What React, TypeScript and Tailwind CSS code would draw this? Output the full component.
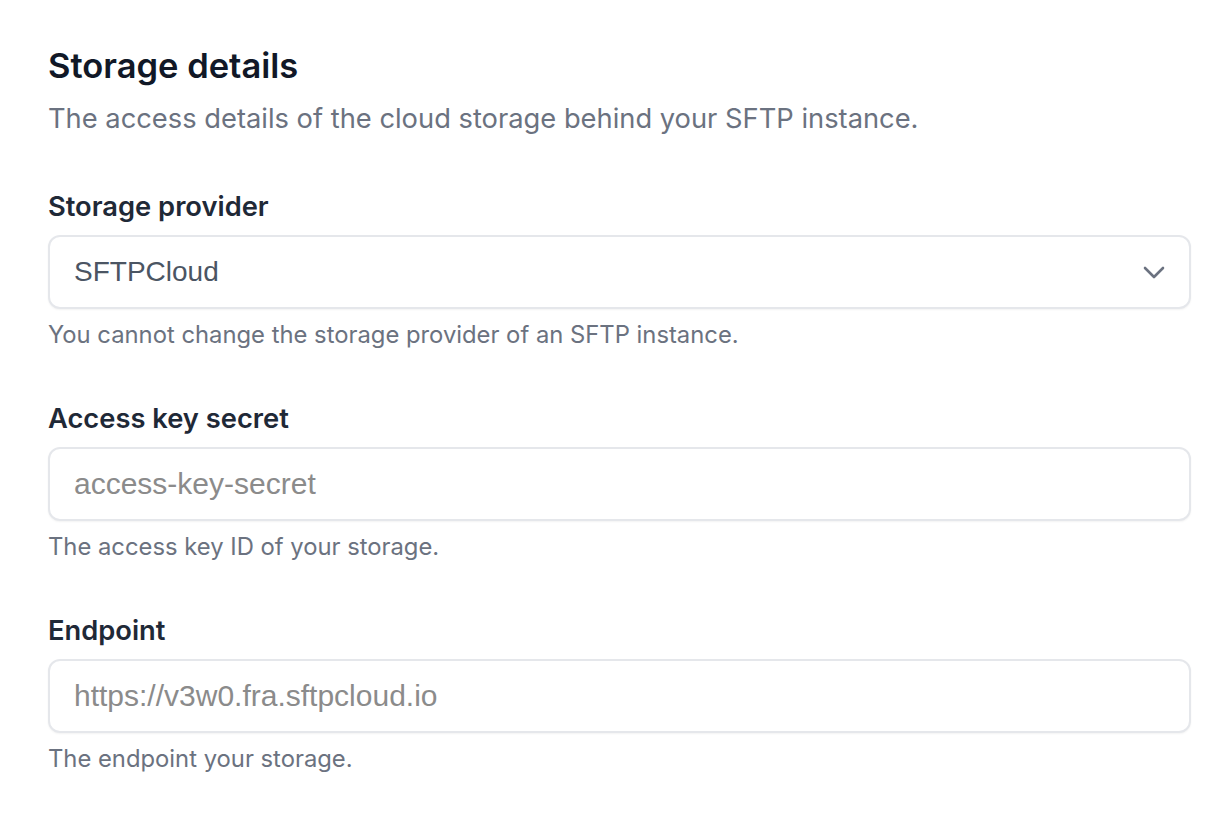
import React from 'react';

const FIELDS = [
  { label: 'Access key secret', placeholder: 'access-key-secret', help: 'The access key ID of your storage.' },
  { label: 'Endpoint', placeholder: 'https://v3w0.fra.sftpcloud.io', help: 'The endpoint your storage.' },
];

const inputBox =
  'w-full h-[74px] rounded-[12px] border-2 border-[#e5e7eb] bg-white shadow-[0_1px_2px_rgba(0,0,0,0.05)] px-6 outline-none';

const App: React.FC = () => {
  return (
    <div className="min-h-screen bg-white pt-[42px] pl-12 pr-[39px] font-['Inter',sans-serif]">
      <h2 className="text-[34.5px] leading-[48px] font-semibold text-[#111827]">Storage details</h2>
      <p className="mt-[9px] text-[27.3px] leading-[40px] text-[#6b7280]">
        The access details of the cloud storage behind your SFTP instance.
      </p>

      {/* Provider */}
      <div className="mt-12">
        <label className="block text-[27.3px] leading-[40px] font-semibold text-[#1f2937]">Storage provider</label>
        <div className={`${inputBox} mt-2 flex items-center justify-between`}>
          <span className="font-['Liberation_Sans',Arial,sans-serif] text-[28px] text-[#4b5563]">SFTPCloud</span>
          <svg className="w-[24px] h-[24px] -mr-px text-[#6b7280]" viewBox="0 0 24 24" fill="none" stroke="currentColor" strokeWidth={2.6}>
            <path strokeLinecap="round" strokeLinejoin="round" d="M3 8l9 9 9-9" />
          </svg>
        </div>
        <p className="mt-2 text-[23.8px] leading-[36px] text-[#6b7280]">
          You cannot change the storage provider of an SFTP instance.
        </p>
      </div>

      {FIELDS.map((f) => (
        <div key={f.label} className="mt-[46px]">
          <label className="block text-[27.3px] leading-[40px] font-semibold text-[#1f2937]">{f.label}</label>
          <input
            placeholder={f.placeholder}
            className={`${inputBox} mt-2 block font-['Liberation_Sans',Arial,sans-serif] text-[30px] text-[#4b5563] placeholder:text-[#8b8b8b]`}
          />
          <p className="mt-2 text-[23.8px] leading-[36px] text-[#6b7280]">{f.help}</p>
        </div>
      ))}
    </div>
  );
};

export default App;
